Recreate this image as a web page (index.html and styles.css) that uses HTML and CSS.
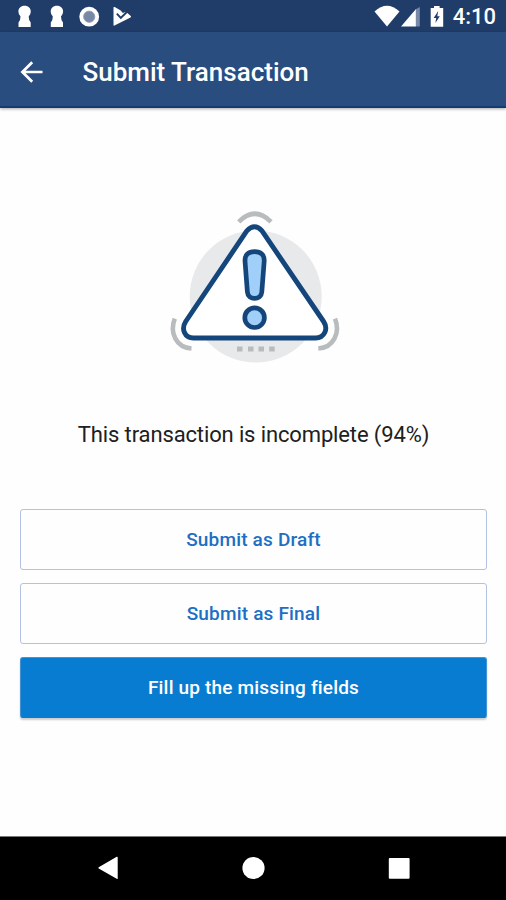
FILE: index.html
```html
<!DOCTYPE html>
<html lang="en">
<head>
<meta charset="utf-8">
<title>Submit Transaction</title>
<link rel="stylesheet" href="styles.css">
</head>
<body>
<div class="status-bar">
  <svg class="status-left" width="140" height="32" viewBox="0 0 140 32" fill="#fff">
    <path d="M24.600 5.800C28.500 5.800 30.800 8.500 30.800 11.500Q30.800 14.500 28.700 16.500Q28.700 20.500 30.700 22.500V27H18.500V22.500Q20.500 20.500 20.500 16.500Q18.400 14.500 18.400 11.500C18.400 8.500 20.700 5.800 24.600 5.800z"/>
    <path d="M56.900 5.800C60.800 5.800 63.100 8.500 63.100 11.500Q63.100 14.500 61 16.500Q61 20.500 63 22.500V27H50.800V22.500Q52.800 20.500 52.800 16.500Q50.700 14.500 50.700 11.500C50.700 8.500 53 5.800 56.900 5.800z"/>
    <circle cx="89.200" cy="16.700" r="9.900"/>
    <circle cx="89.200" cy="16.700" r="5.600" fill="#7788a6" stroke="#93a1b9" stroke-width="1"/>
    <path d="M113.500 7.500q0-1 1.200-.4l6 3.500 2.200 2.400 3-1.200 4.600 3.900q1.100.9 0 1.700L114.500 25.600q-1 .4-1-.6z"/>
    <path d="M116.800 13.700l4 4.200 7.600-7.400" fill="none" stroke="#203c68" stroke-width="1.900"/>
  </svg>
  <div class="status-right">
    <svg width="80" height="32" viewBox="0 0 80 32" fill="#fff">
      <path d="M4.500 11.600Q17-.2 29.500 11.600L17 26.500z"/>
      <path d="M46 9v17.500H31z"/>
      <path d="M45.800 9.200l4-2.200v19.500h-4z" fill="#7889a5"/>
      <path d="M60.700 8H64V6h5.600v2h3.600v18.700H60.700z"/>
      <path d="M68.200 11l-4.500 7h2.500l-.8 5 4.400-6.800h-2.500z" fill="#203c68"/>
    </svg>
    <span class="clock">4:10</span>
  </div>
</div>
<header class="app-bar">
  <svg width="24" height="24" viewBox="0 0 24 24" fill="none" stroke="#fff" stroke-width="2.700"><path d="M13.200 2.200L3.400 12l9.800 9.800M3.400 12H23.500"/></svg>
  <h1>Submit Transaction</h1>
</header>
<main>
  <svg class="warning" width="190" height="170" viewBox="160 200 190 170" fill="none">
    <circle cx="255.700" cy="296.500" r="66" fill="#e8e9eb"/>
    <g stroke="#b9bcbd" stroke-width="4.600">
      <path d="M238.700 221.800Q254.800 205.800 271 221.800"/>
      <path d="M174.800 318.600C169.300 332.500 176 347.500 191.500 348.500"/>
      <path d="M335 318.600C340.500 332.500 333.800 347.500 318.300 348.500"/>
    </g>
    <path d="M246.800 230.900Q254.600 222.500 262 230.900L323.600 321.500C328.500 329 324.500 338 315.500 338H193.500C184.500 338 181 329 185.700 321.500Z" fill="#fff" stroke="#14467c" stroke-width="4.900" stroke-linejoin="round"/>
    <path d="M254.600 251.700C248 251.700 244.700 255.300 245 261L247.400 292C248 300.600 261.200 300.600 261.800 292L264.200 261C264.500 255.300 261.200 251.700 254.600 251.700Z" fill="#a0d0fa" stroke="#14467c" stroke-width="4.700"/>
    <circle cx="254.600" cy="317.700" r="9.800" fill="#a0d0fa" stroke="#14467c" stroke-width="4.700"/>
    <path d="M237 349h5.500M248 349h5.500M258.500 349h5.500M269.200 349h5.500" stroke="#b9bcbd" stroke-width="5"/>
  </svg>
  <p class="message">This transaction is incomplete (94%)</p>
  <div class="actions">
    <button>Submit as Draft</button>
    <button>Submit as Final</button>
    <button class="primary">Fill up the missing fields</button>
  </div>
</main>
<nav class="nav-bar">
  <svg width="24" height="24" viewBox="0 0 24 24"><path d="M2.700 11.200L20.700.8q1-.4 1 .6v21q0 1-1 .4L2.700 12.500q-.8-.6 0-1.300z"/></svg>
  <svg width="24" height="24" viewBox="0 0 24 24"><circle cx="11.500" cy="12" r="11.100"/></svg>
  <svg width="24" height="24" viewBox="0 0 24 24"><rect x="1.800" y="2" width="20.800" height="20.800" rx="1"/></svg>
</nav>
</body>
</html>
```
FILE: styles.css
```css
* { box-sizing: border-box; }
body {
  margin: 0;
  height: 900px;
  display: flex;
  flex-direction: column;
  background: #fefefe;
  font-family: Roboto, "Liberation Sans", sans-serif;
  overflow: hidden;
}
svg { display: block; flex: none; }
.status-bar {
  height: 32px;
  display: flex;
  justify-content: space-between;
  background: #203c68;
}
.status-right {
  display: flex;
  align-items: center;
  padding-right: 10px;
}
.clock {
  width: 44px;
  margin-left: 2px;
  line-height: 32px;
  padding-top: 2px;
  color: #fff;
  font-size: 22px;
  font-weight: 500;
  text-align: right;
  white-space: nowrap;
}
.app-bar {
  height: 76px;
  display: flex;
  align-items: center;
  padding: 6px 0 0 19px;
  background: #2a4d80;
  border-bottom: 2px solid #123b76;
  box-shadow: 0 1px 3px rgba(0, 0, 0, .35);
}
h1 {
  margin: 0 0 0 39.5px;
  color: #fff;
  font-size: 26px;
  font-weight: 500;
  line-height: 32px;
  white-space: nowrap;
}
main {
  flex: 1;
  display: flex;
  flex-direction: column;
  padding: 92px 19px 0 20px;
}
.warning { margin-left: 140px; }
.message {
  margin: 50px 0 0;
  color: #202020;
  font-size: 22px;
  line-height: 30px;
  letter-spacing: -.13px;
  text-align: center;
  white-space: nowrap;
}
.actions {
  margin-top: 59px;
  display: flex;
  flex-direction: column;
  gap: 13px;
}
button {
  height: 61px;
  padding: 0;
  border: 1.5px solid #b3c1e2;
  border-radius: 3px;
  background: #fefefe;
  color: #1d6fc4;
  font: 500 19px Roboto, "Liberation Sans", sans-serif;
  letter-spacing: .18px;
}
.primary {
  background: #087cd0;
  color: #fff;
  border-color: #4593d5;
  border-bottom-color: #087cd0;
  box-shadow: 0 2px 2px rgba(0, 0, 0, .2);
}
.nav-bar {
  height: 64px;
  display: flex;
  align-items: center;
  justify-content: space-between;
  padding: 0 95px 2px 96px;
  background: #000;
  border-top: 1px solid #777;
}
.nav-bar svg { fill: #fff; }
```
